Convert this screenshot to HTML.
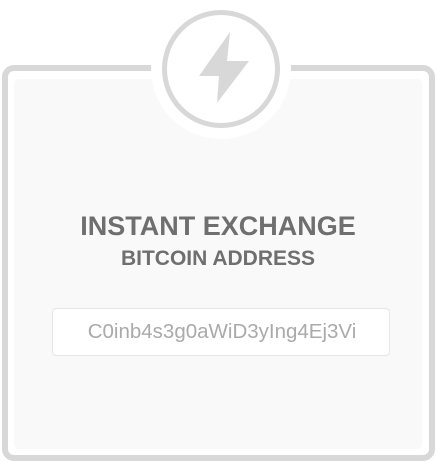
<!DOCTYPE html>
<html><head><meta charset="utf-8"><style>
html,body{margin:0;padding:0;width:436px;height:462px;background:#fff;overflow:hidden;font-family:"Liberation Sans",sans-serif;}
.outer{position:absolute;left:2px;top:65px;width:421px;height:384px;border:6px solid #d8d8d8;border-radius:12px;background:#fff;}
.inner{position:absolute;left:14px;top:79px;width:408px;height:370px;background:#f9f9f9;border-radius:5px;}
svg{position:absolute;left:0;top:0;}
.t1{position:absolute;left:0;width:436px;top:211px;text-align:center;font-weight:bold;font-size:27px;color:#6f6f6f;}
.t2{position:absolute;left:0;width:436px;top:247px;text-align:center;font-weight:bold;font-size:21px;color:#6f6f6f;}
.inp{position:absolute;left:52px;top:308px;width:338px;height:48px;background:#fff;border:1px solid #e6e6e6;border-radius:4px;box-sizing:border-box;text-align:center;line-height:46px;font-size:20.5px;color:#aaa;padding-left:2px;}
</style></head><body>
<div class="outer"></div>
<div class="inner"></div>
<svg width="436" height="462">
<circle cx="221" cy="69" r="70" fill="#fff"/>
<circle cx="221" cy="69" r="56.5" fill="none" stroke="#d8d8d8" stroke-width="5"/>
<path d="M230 32 L199 76 L219 76 L217 103 L249 61 L227 61 Z" fill="#d8d8d8"/>
</svg>
<div class="t1">INSTANT EXCHANGE</div>
<div class="t2">BITCOIN ADDRESS</div>
<div class="inp">C0inb4s3g0aWiD3yIng4Ej3Vi</div>
</body></html>
